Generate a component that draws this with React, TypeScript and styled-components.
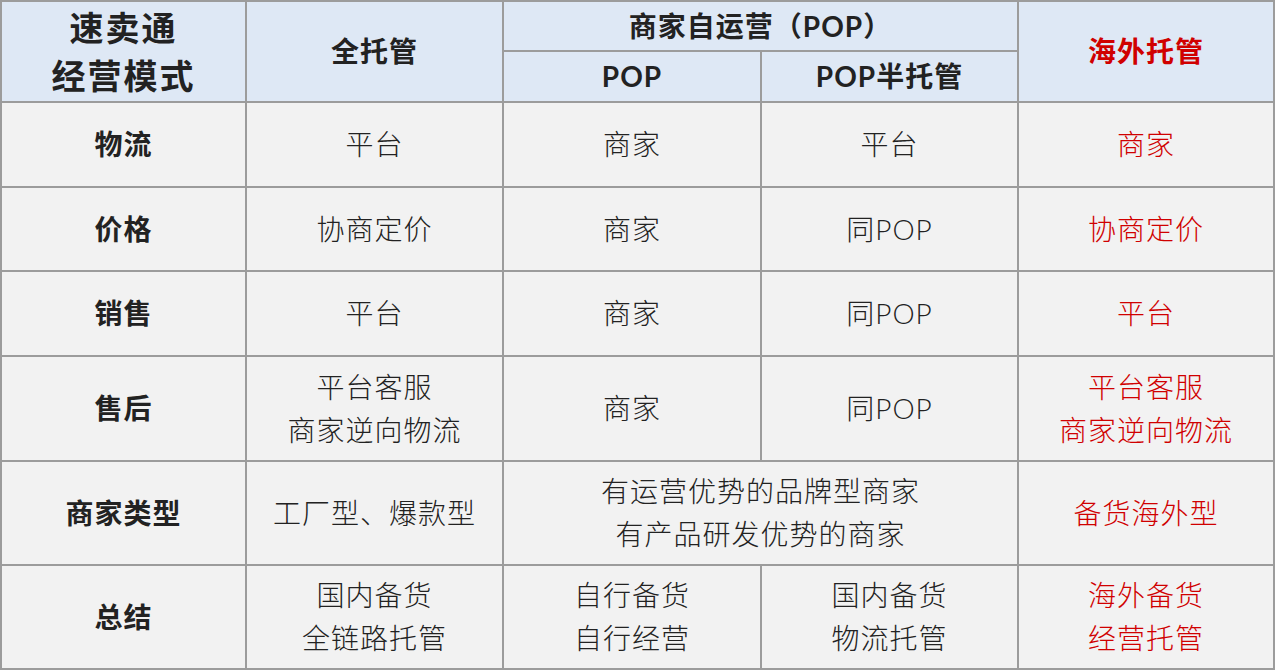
import styled, { createGlobalStyle } from "styled-components";

const GlobalStyle = createGlobalStyle`
  html, body {
    margin: 0;
    padding: 0;
    background: #ffffff;
  }
  body {
    font-family: Lato, "Noto Sans CJK SC", sans-serif;
  }
`;

const Grid = styled.div`
  width: 1275px;
  height: 670px;
  box-sizing: border-box;
  display: grid;
  grid-template-columns: 243px 255px 256px 255px 254px;
  grid-template-rows: 48px 49px 83px 82px 83px 103px 102px 102px;
  gap: 2px;
  padding: 2px;
  background: #9c9c9c;
`;

interface CellProps {
  $col?: string;
  $row?: string;
  $head?: boolean;
  $label?: boolean;
  $red?: boolean;
  $big?: boolean;
}

const Cell = styled.div<CellProps>`
  grid-column: ${({ $col }) => $col || "auto"};
  grid-row: ${({ $row }) => $row || "auto"};
  display: flex;
  align-items: center;
  justify-content: center;
  text-align: center;
  background: ${({ $head }) => ($head ? "#dee8f5" : "#f2f2f2")};
  color: ${({ $red }) => ($red ? "#d00000" : "#222222")};
  font-size: ${({ $big }) => ($big ? "34px" : "28px")};
  letter-spacing: ${({ $big }) => ($big ? "2px" : "1px")};
  font-weight: ${({ $head, $label }) => ($head || $label ? 700 : 300)};
  line-height: ${({ $big }) => ($big ? "48px" : "43px")};
  white-space: pre-line;
`;

type Row = {
  label: string;
  cells: { text: string; span?: boolean }[];
  red: string;
};

const rows: Row[] = [
  { label: "物流", cells: [{ text: "平台" }, { text: "商家" }, { text: "平台" }], red: "商家" },
  { label: "价格", cells: [{ text: "协商定价" }, { text: "商家" }, { text: "同POP" }], red: "协商定价" },
  { label: "销售", cells: [{ text: "平台" }, { text: "商家" }, { text: "同POP" }], red: "平台" },
  {
    label: "售后",
    cells: [{ text: "平台客服\n商家逆向物流" }, { text: "商家" }, { text: "同POP" }],
    red: "平台客服\n商家逆向物流",
  },
  {
    label: "商家类型",
    cells: [{ text: "工厂型、爆款型" }, { text: "有运营优势的品牌型商家\n有产品研发优势的商家", span: true }],
    red: "备货海外型",
  },
  {
    label: "总结",
    cells: [{ text: "国内备货\n全链路托管" }, { text: "自行备货\n自行经营" }, { text: "国内备货\n物流托管" }],
    red: "海外备货\n经营托管",
  },
];

const App = () => {
  return (
    <>
      <GlobalStyle />
      <Grid>
        <Cell $head $big $col="1" $row="1 / span 2">
          {"速卖通\n经营模式"}
        </Cell>
        <Cell $head $col="2" $row="1 / span 2">
          全托管
        </Cell>
        <Cell $head $col="3 / span 2" $row="1">
          商家自运营（POP）
        </Cell>
        <Cell $head $red $col="5" $row="1 / span 2">
          海外托管
        </Cell>
        <Cell $head $col="3" $row="2">
          POP
        </Cell>
        <Cell $head $col="4" $row="2">
          POP半托管
        </Cell>
        {rows.map((r) => (
          <>
            <Cell key={r.label} $label>
              {r.label}
            </Cell>
            {r.cells.map((c, i) => (
              <Cell key={r.label + i} $col={c.span ? "span 2" : undefined}>
                {c.text}
              </Cell>
            ))}
            <Cell key={r.label + "red"} $red>
              {r.red}
            </Cell>
          </>
        ))}
      </Grid>
    </>
  );
};

export default App;
